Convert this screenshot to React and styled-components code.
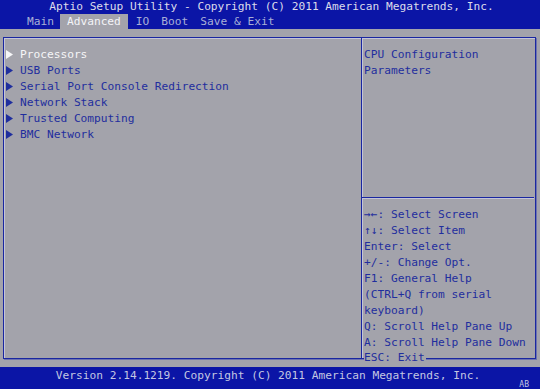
import React from "react";
import styled, { createGlobalStyle } from "styled-components";

const BLUE = "#0b15a6";
const GREY = "#a3a3ab";
const INK = "#1f2e9e";
const LINE = "#1a27a0";

const Global = createGlobalStyle`
  html, body { margin: 0; padding: 0; background: ${GREY}; }
  body {
    width: 540px; height: 389px; overflow: hidden;
    font-family: "DejaVu Sans Mono", "Liberation Mono", monospace;
    font-size: 11.2px;
  }
  * { box-sizing: border-box; }
`;

const Screen = styled.div`
  width: 540px;
  height: 389px;
  display: flex;
  flex-direction: column;
  background: ${GREY};
  position: relative;
  overflow: hidden;
`;

const Header = styled.header`
  background: ${BLUE};
  height: 29px;
  flex: none;
  display: flex;
  flex-direction: column;
`;

const Title = styled.div`
  height: 14px;
  line-height: 14px;
  text-align: center;
  color: #dcdcea;
  padding-left: 3px;
`;

const Tabs = styled.nav`
  display: flex;
  height: 15px;
  padding-left: 21px;
`;

const Tab = styled.div`
  line-height: 15px;
  padding: 0 ${(p) => (p.$active ? "7px" : "6px")};
  margin-right: ${(p) => (p.$active ? "2px" : "0")};
  color: ${(p) => (p.$active ? "#f4f4f8" : "#a9b0d6")};
  background: ${(p) => (p.$active ? GREY : "transparent")};
`;

const Body = styled.main`
  flex: none;
  height: 338px;
  padding: 8px 4px 8px 3px;
  display: flex;
`;

const Frame = styled.section`
  flex: 1;
  height: 322px;
  display: grid;
  grid-template-columns: 357px 1fr;
  grid-template-rows: 320px;
  border: 1px solid ${LINE};
  box-shadow: inset 1px 1px 0 #c4c4d8, 1px 1px 0 #6c72b0;
`;

const Menu = styled.div`
  padding-top: 8px;
  display: flex;
  flex-direction: column;
`;

const Item = styled.div`
  display: flex;
  align-items: center;
  height: 16px;
  color: ${(p) => (p.$selected ? "#f6f6f8" : INK)};
`;

const Arrow = styled.svg`
  width: 7px;
  height: 9px;
  margin-left: 2px;
  margin-right: 7px;
  flex: none;
`;

const Side = styled.aside`
  border-left: 1px solid ${LINE};
  box-shadow: inset 1px 0 0 #c4c4d8;
  display: flex;
  flex-direction: column;
  min-height: 0;
`;

const HelpTop = styled.div`
  flex: none;
  height: 160px;
  padding: 9px 0 0 2px;
  color: ${INK};
  border-bottom: 1px solid ${LINE};
  box-shadow: 0 1px 0 #c4c4d8;
  margin-right: 1px;
`;

const Line = styled.div`
  height: 16px;
  line-height: 16px;
  white-space: pre;
`;

const Keys = styled.div`
  flex: none;
  height: 160px;
  padding: 9px 0 0 2px;
  color: ${INK};
  display: flex;
  flex-direction: column;
`;

const LastLine = styled.div`
  flex: none;
  height: 16px;
  line-height: 14px;
`;

const Cut = styled.span`
  display: inline-block;
  background: ${GREY};
  padding-right: 1px;
  position: relative;
`;

const Footer = styled.footer`
  flex: none;
  background: ${BLUE};
  height: 22px;
  position: relative;
  color: #c3c7e2;
  text-align: center;
  line-height: 16px;
  padding: 1px 4px 0 0;
`;

const Corner = styled.span`
  position: absolute;
  right: 11px;
  bottom: 0;
  font-size: 8px;
  line-height: 8px;
  color: #c3c7e2;
`;

const items = [
  "Processors",
  "USB Ports",
  "Serial Port Console Redirection",
  "Network Stack",
  "Trusted Computing",
  "BMC Network",
];

const keys = [
  "\u2192\u2190: Select Screen",
  "\u2191\u2193: Select Item",
  "Enter: Select",
  "+/-: Change Opt.",
  "F1: General Help",
  "(CTRL+Q from serial",
  "keyboard)",
  "Q: Scroll Help Pane Up",
  "A: Scroll Help Pane Down",
];

export default function App() {
  return (
    <Screen>
      <Global />
      <Header>
        <Title>Aptio Setup Utility - Copyright (C) 2011 American Megatrends, Inc.</Title>
        <Tabs>
          <Tab>Main</Tab>
          <Tab $active>Advanced</Tab>
          <Tab>IO</Tab>
          <Tab>Boot</Tab>
          <Tab>Save &amp; Exit</Tab>
        </Tabs>
      </Header>
      <Body>
        <Frame>
          <Menu>
            {items.map((t, i) => (
              <Item key={t} $selected={i === 0}>
                <Arrow viewBox="0 0 7 9">
                  <polygon points="0,0 7,4.5 0,9" fill={i === 0 ? "#f6f6f8" : INK} />
                </Arrow>
                {t}
              </Item>
            ))}
          </Menu>
          <Side>
            <HelpTop>
              <Line>CPU Configuration</Line>
              <Line>Parameters</Line>
            </HelpTop>
            <Keys>
              {keys.map((k) => (
                <Line key={k}>{k}</Line>
              ))}
              <LastLine>
                <Cut>ESC: Exit</Cut>
              </LastLine>
            </Keys>
          </Side>
        </Frame>
      </Body>
      <Footer>
        Version 2.14.1219. Copyright (C) 2011 American Megatrends, Inc.
        <Corner>AB</Corner>
      </Footer>
    </Screen>
  );
}
